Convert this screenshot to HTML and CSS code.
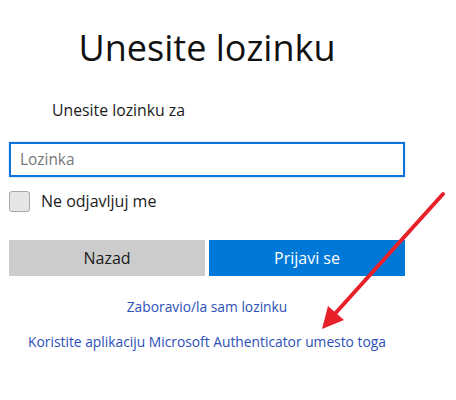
FILE: index.html
```html
<!DOCTYPE html>
<html lang="sr">
<head>
<meta charset="utf-8">
<link rel="stylesheet" href="styles.css">
</head>
<body>
<div class="page">
  <h1 class="title">Unesite lozinku</h1>
  <p class="subtitle">Unesite lozinku za</p>
  <div class="input">Lozinka</div>
  <label class="check"><span class="box"></span><span class="check-label">Ne odjavljuj me</span></label>
  <div class="buttons">
    <div class="btn btn-back">Nazad</div>
    <div class="btn btn-primary">Prijavi se</div>
  </div>
  <a class="link link-first">Zaboravio/la sam lozinku</a>
  <a class="link link-second">Koristite aplikaciju Microsoft Authenticator umesto toga</a>
  <svg class="arrow" width="456" height="400" viewBox="0 0 456 400">
    <line x1="443" y1="194" x2="332" y2="317" stroke="#e8202a" stroke-width="4" stroke-linecap="round"/>
    <polygon points="322,329 328,306 344,320" fill="#e8202a"/>
  </svg>
</div>
</body>
</html>
```
FILE: styles.css
```css
html, body {
  margin: 0;
  padding: 0;
  background: #ffffff;
}
.page {
  position: relative;
  width: 456px;
  height: 400px;
  padding: 0 0 0 9px;
  box-sizing: border-box;
  font-family: "Open Sans", "Noto Sans", sans-serif;
  color: #1b1b1b;
  display: flex;
  flex-direction: column;
}
.title {
  width: 396px;
  margin: 24px 0 0 0;
  font-weight: 400;
  font-size: 36px;
  line-height: 48px;
  text-align: center;
  color: #111;
}
.subtitle {
  margin: 28px 0 0 43px;
  font-size: 15.8px;
  line-height: 21px;
}
.input {
  width: 396px;
  height: 35px;
  box-sizing: border-box;
  margin-top: 21px;
  border: 2px solid #0a74da;
  box-shadow: 0 0 1px 0 #6aaaf0;
  padding-left: 9px;
  font-size: 15.4px;
  line-height: 31px;
  color: #777;
}
.check {
  display: flex;
  align-items: center;
  margin-top: 13px;
  height: 22px;
}
.box {
  width: 19px;
  height: 19px;
  border: 1px solid #a8a8a8;
  border-radius: 3px;
  background: #e6e6e6;
}
.check-label {
  margin-left: 11px;
  font-size: 16px;
  line-height: 22px;
}
.buttons {
  display: flex;
  gap: 4px;
  width: 396px;
  margin-top: 28px;
}
.btn {
  flex: 1;
  height: 36px;
  line-height: 36px;
  text-align: center;
  font-size: 16px;
}
.btn-back {
  background: #cccccc;
  color: #1b1b1b;
}
.btn-primary {
  background: #0078d7;
  color: #ffffff;
}
.link {
  width: 396px;
  text-align: center;
  font-size: 13.8px;
  line-height: 18px;
  color: #2c4fb8;
}
.link-first {
  margin-top: 22px;
}
.link-second {
  margin-top: 17px;
}
.arrow {
  position: absolute;
  left: 0;
  top: 0;
}
```
